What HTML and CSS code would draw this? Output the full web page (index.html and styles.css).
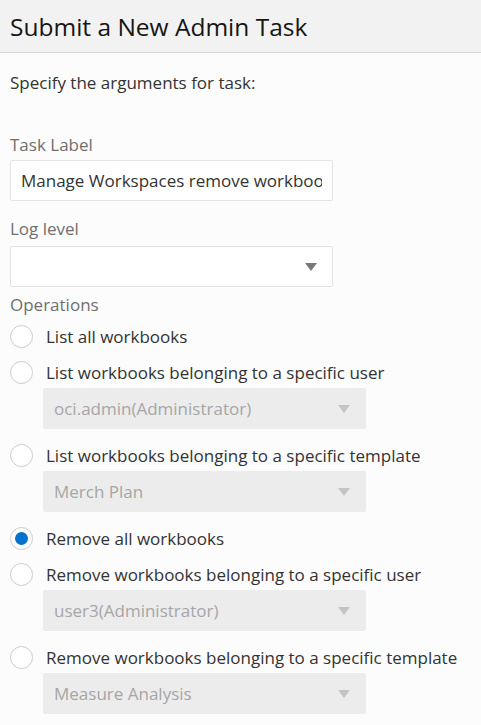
FILE: index.html
```html
<!DOCTYPE html>
<html lang="en">
<head>
    <meta charset="UTF-8">
    <meta name="viewport" content="width=device-width, initial-scale=1.0">
    <title>Submit a New Admin Task</title>
    <link rel="stylesheet" href="styles.css">
</head>
<body>
    <header class="dialog-header">
        <h1>Submit a New Admin Task</h1>
    </header>

    <main class="dialog-body">
        <p class="intro">Specify the arguments for task:</p>

        <div class="field">
            <label class="field-label" for="task-label">Task Label</label>
            <div class="text-box">
                <input type="text" id="task-label" value="Manage Workspaces remove workbooks">
            </div>
        </div>

        <div class="field field-log">
            <label class="field-label">Log level</label>
            <div class="select-box">
                <span class="select-value"></span>
                <span class="caret"></span>
            </div>
        </div>

        <div class="operations">
            <div class="field-label ops-label">Operations</div>

            <div class="radio-row">
                <span class="radio"></span>
                <span class="radio-text">List all workbooks</span>
            </div>

            <div class="radio-row">
                <span class="radio"></span>
                <span class="radio-text">List workbooks belonging to a specific user</span>
            </div>
            <div class="select-box disabled">
                <span class="select-value">oci.admin(Administrator)</span>
                <span class="caret"></span>
            </div>

            <div class="radio-row">
                <span class="radio"></span>
                <span class="radio-text">List workbooks belonging to a specific template</span>
            </div>
            <div class="select-box disabled">
                <span class="select-value">Merch Plan</span>
                <span class="caret"></span>
            </div>

            <div class="radio-row">
                <span class="radio checked"></span>
                <span class="radio-text">Remove all workbooks</span>
            </div>

            <div class="radio-row">
                <span class="radio"></span>
                <span class="radio-text">Remove workbooks belonging to a specific user</span>
            </div>
            <div class="select-box disabled">
                <span class="select-value">user3(Administrator)</span>
                <span class="caret"></span>
            </div>

            <div class="radio-row">
                <span class="radio"></span>
                <span class="radio-text">Remove workbooks belonging to a specific template</span>
            </div>
            <div class="select-box disabled">
                <span class="select-value">Measure Analysis</span>
                <span class="caret"></span>
            </div>
        </div>
    </main>
</body>
</html>
```

FILE: styles.css
```css
/* Global */
body {
    margin: 0;
    font-family: 'Open Sans', 'Noto Sans', sans-serif;
    font-size: 17px;
    color: #333333;
    background-color: #fcfcfc;
    overflow: hidden;
}

/* Header */
.dialog-header {
    height: 52px;
    background-color: #f2f2f2;
    border-bottom: 1px solid #d6d6d6;
    padding: 0 10px;
    display: flex;
    align-items: center;
}

.dialog-header h1 {
    margin: 0;
    font-size: 24.5px;
    font-weight: 400;
    color: #161513;
}

/* Body */
.dialog-body {
    padding: 0 10px;
}

.intro {
    margin: 18px 0 0;
    line-height: 24px;
}

.field {
    margin-top: 38px;
}

.field-log {
    margin-top: 16px;
}

.field-label {
    display: block;
    color: #6f6f6f;
    line-height: 24px;
    margin-bottom: 3px;
}

.field-log .field-label {
    margin-bottom: 5px;
}

.text-box,
.select-box {
    box-sizing: border-box;
    width: 323px;
    height: 41px;
    border: 1px solid #e3e3e3;
    border-radius: 2px;
    background-color: #ffffff;
}

.text-box input {
    box-sizing: border-box;
    width: 100%;
    height: 100%;
    border: none;
    outline: none;
    background: transparent;
    padding: 0 10px;
    font: inherit;
    color: #333333;
}

.select-box {
    display: flex;
    align-items: center;
    justify-content: space-between;
    padding: 0 15px 0 10px;
}

.caret {
    width: 0;
    height: 0;
    border-left: 6px solid transparent;
    border-right: 6px solid transparent;
    border-top: 8px solid #7a7a7a;
}

/* Operations */
.operations {
    margin-top: 6px;
}

.ops-label {
    margin-bottom: 3px;
}

.radio-row {
    display: flex;
    align-items: center;
    height: 32px;
    margin-bottom: 4px;
}

.radio {
    box-sizing: border-box;
    width: 23px;
    height: 23px;
    border: 1.5px solid #cccccc;
    border-radius: 50%;
    background-color: #ffffff;
    margin-right: 13px;
    display: flex;
    align-items: center;
    justify-content: center;
}

.radio.checked::after {
    content: '';
    width: 13px;
    height: 13px;
    border-radius: 50%;
    background-color: #0572ce;
}

/* sits under its radio row, pulled up over the row's bottom margin */
.select-box.disabled {
    margin: -4px 0 10px 33px;
    background-color: #ececec;
    border-color: #ececec;
    color: #a6a6a6;
}

.select-box.disabled .caret {
    border-top-color: #c4c4c4;
}
```
